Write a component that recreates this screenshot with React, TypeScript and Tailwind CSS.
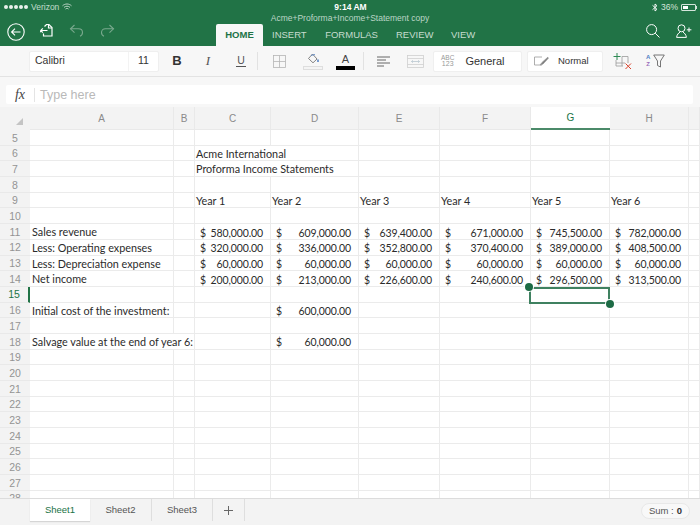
const ui = "font-['Liberation_Sans',Arial,sans-serif]";
const cols = [144, 21, 76, 88, 81, 91, 79, 79, 11];
const colNames = ["A", "B", "C", "D", "E", "F", "G", "H", ""];

type Cell = { t?: string; d?: string; v?: string; hideR?: boolean };
const money = (d: string | undefined, v: string): Cell => ({ d, v });

const rowsData: Record<number, Record<number, Cell>> = {
  6: { 2: { t: "Acme International", hideR: true } },
  7: { 2: { t: "Proforma Income Statements", hideR: true } },
  9: { 2: { t: "Year 1" }, 3: { t: "Year 2" }, 4: { t: "Year 3" }, 5: { t: "Year 4" }, 6: { t: "Year 5" }, 7: { t: "Year 6" } },
  11: { 0: { t: "Sales revenue" }, 2: money("$", "580,000.00"), 3: money("$", "609,000.00"), 4: money("$", "639,400.00"), 5: money("$", "671,000.00"), 6: money("$", "745,500.00"), 7: money("$", "782,000.00") },
  12: { 0: { t: "Less: Operating expenses" }, 2: money("$", "320,000.00"), 3: money("$", "336,000.00"), 4: money("$", "352,800.00"), 5: money("$", "370,400.00"), 6: money("$", "389,000.00"), 7: money("$", "408,500.00") },
  13: { 0: { t: "Less: Depreciation expense" }, 2: money("$", "60,000.00"), 3: money("$", "60,000.00"), 4: money("$", "60,000.00"), 5: money("$", "60,000.00"), 6: money("$", "60,000.00"), 7: money("$", "60,000.00") },
  14: { 0: { t: "Net income" }, 2: money("$", "200,000.00"), 3: money("$", "213,000.00"), 4: money("$", "226,600.00"), 5: money("$", "240,600.00"), 6: money("$", "296,500.00"), 7: money("$", "313,500.00") },
  16: { 0: { t: "Initial cost of the investment:" }, 3: money("$", "600,000.00") },
  18: { 0: { t: "Salvage value at the end of year 6:", hideR: true }, 3: money("$", "60,000.00") },
};
const rowNums = Array.from({ length: 24 }, (_, i) => i + 5);

function Row({ n }: { n: number }) {
  const data = rowsData[n] ?? {};
  return (
    <div className="flex h-[15.7px] shrink-0">
      <div className={`w-[30px] shrink-0 bg-[#f3f3f3] flex items-center justify-center pt-[1px] text-[10.5px] leading-none border-b border-[#e9e9e9] ${ui} ${n === 15 ? "text-[#217346] border-r-2 border-r-[#217346]" : "text-[#939393]"}`}>{n}</div>
      {cols.map((w, i) => {
        const c = data[i];
        return (
          <div key={i} style={{ width: w }} className={`relative shrink-0 border-b border-[#ebebeb] ${c?.hideR ? "" : "border-r"} border-r-[#ebebeb] text-[10.8px] leading-[16px] text-[#2b2b2b] font-['Lato',sans-serif] whitespace-nowrap`}>
            {c?.t && <span className={`${i === 0 ? "pl-[2px]" : "pl-[1px]"} relative z-10`}>{c.t}</span>}
            {c?.d && (
              <div className="flex justify-between pl-[5px] pr-[7px] pt-[0.5px] text-[10.5px] tracking-[-0.1px]">
                <span>{c.d}</span>
                <span>{c.v}</span>
              </div>
            )}
          </div>
        );
      })}
    </div>
  );
}

function Sep() {
  return <div className="w-px h-[18px] bg-[#e2e2e2]" />;
}

export default function App() {
  return (
    <div className={`w-[700px] h-[525px] relative overflow-hidden bg-white flex flex-col ${ui}`}>
      {/* Green header */}
      <div className="h-[46px] bg-[#217346] shrink-0 relative text-white flex flex-col">
        <div className="h-[14px] flex items-center justify-between pl-[4px] pr-[3px] text-[8.5px] relative">
          <div className="flex items-center gap-[3px] opacity-90">
            <span className="flex gap-[1px]">
              {[0, 1, 2, 3, 4].map((i) => (
                <span key={i} className="w-[4px] h-[4px] rounded-full bg-white" />
              ))}
            </span>
            <span className="text-[#d4e5db]">Verizon</span>
            <svg width="10" height="8" viewBox="0 0 10 8" fill="none" stroke="#dbe9e1" strokeWidth="0.9">
              <path d="M0.5 2.8C3 0.4 7 0.4 9.5 2.8" />
              <path d="M2 4.4C3.8 2.8 6.2 2.8 8 4.4" />
              <path d="M3.5 6C4.4 5.2 5.6 5.2 6.5 6" />
            </svg>
          </div>
          <span className="absolute left-0 right-0 text-center font-bold text-[8.5px] pl-[1px] pointer-events-none">9:14 AM</span>
          <div className="flex items-center gap-[3px] text-[#d4e5db]">
            <svg width="6" height="9" viewBox="0 0 6 9" fill="none" stroke="#fff" strokeWidth="0.9"><path d="M0.5 2.3L5 6.3L3 8V1L5 2.7L0.5 6.7" /></svg>
            <span>36%</span>
            <span className="w-[15px] h-[7px] border border-[#d4e5db] rounded-[1px] flex items-stretch p-px">
              <span className="w-[5px] bg-white" />
            </span>
            <span className="w-[1px] h-[3px] -ml-[3px] bg-[#d4e5db]" />
          </div>
        </div>
        <div className="absolute top-[12px] left-0 right-0 text-center text-[8.5px] text-[#bcd6c7]">Acme+Proforma+Income+Statement copy</div>
        <div className="flex-1 flex items-end">
          <div className="w-[216px] h-full flex items-center shrink-0">
            <svg className="ml-[7px] mt-[3px]" width="18" height="18" viewBox="0 0 18 18" fill="none" stroke="#fff" strokeWidth="1.1"><circle cx="9" cy="9" r="8.2" /><path d="M13.5 9H4.8M8 5.6L4.6 9L8 12.4" /></svg>
            <svg className="ml-[14px] mt-[1px]" width="15" height="15" viewBox="0 0 15 15" fill="none" stroke="#fff" strokeWidth="1.2"><path d="M5.5 3.5L7.5 1.5H10L13 4.5V13H4.5V10.5" /><path d="M9.5 1.5V5H13" /><path d="M8.5 7.5H3.5C2.2 7.5 1.5 8.3 1.5 9.2M3.8 5.4L1.8 7.5L3.8 9.6" /></svg>
            <svg className="ml-[15px] mt-[1px]" width="15" height="13" viewBox="0 0 15 13" fill="none" stroke="#7aa98e" strokeWidth="1.1"><path d="M5.5 1L1.5 4.8L5.5 8.6" /><path d="M1.5 4.8H9.5C12 4.8 13.5 6.6 13.5 8.6C13.5 10.4 12.5 11.7 11 12.3" /></svg>
            <svg className="ml-[16px] mt-[1px]" width="15" height="13" viewBox="0 0 15 13" fill="none" stroke="#7aa98e" strokeWidth="1.1"><path d="M9.5 1L13.5 4.8L9.5 8.6" /><path d="M13.5 4.8H5.5C3 4.8 1.5 6.6 1.5 8.6C1.5 10.4 2.5 11.7 4 12.3" /></svg>
          </div>
          <div className="w-[47px] h-[22px] pt-[1px] bg-[#f7f7f7] rounded-t-[2px] text-[#217346] text-[9.5px] font-bold flex items-center justify-center shrink-0">HOME</div>
          <div className="flex items-center h-[22px] pt-[1px] text-[9.5px] text-[#c6dccf]">
            <span className="ml-[9px]">INSERT</span>
            <span className="ml-[18.5px]">FORMULAS</span>
            <span className="ml-[18px]">REVIEW</span>
            <span className="ml-[17.5px]">VIEW</span>
          </div>
          <div className="ml-auto h-full flex items-center pr-[8px] gap-[16px]">
            <svg className="mt-[1px]" width="14" height="14" viewBox="0 0 14 14" fill="none" stroke="#fff" strokeWidth="1"><circle cx="5.6" cy="5.6" r="5" /><path d="M9.2 9.2L13.5 13.5" /></svg>
            <svg className="mt-[1px]" width="16" height="14" viewBox="0 0 16 14" fill="none" stroke="#fff" strokeWidth="1"><circle cx="5.5" cy="4.3" r="3.5" /><path d="M0.6 13.4C1 10.4 2.6 9 4 8.2M10.4 13.4C10 10.4 8.4 9 7 8.2" /><path d="M0.6 13.4H10.4" /><path d="M13 3.5V8M10.8 5.8H15.4" /></svg>
          </div>
        </div>
      </div>

      {/* Toolbar */}
      <div className="h-[31px] bg-[#f7f7f7] border-b border-[#e3e3e3] shrink-0 flex items-center">
        <div className="ml-[29px] w-[130px] h-[21px] bg-white rounded-[2px] border border-[#efefef] flex items-center text-[10.5px] text-[#333]">
          <span className="pl-[5px] flex-1">Calibri</span>
          <span className="w-px h-full bg-[#f3f3f3]" />
          <span className="w-[29px] text-center">11</span>
        </div>
        <span className="ml-[13px] w-[10px] text-center text-[13px] font-bold text-[#333]">B</span>
        <span className="ml-[22px] w-[8px] text-center text-[13px] italic text-[#555] font-['Liberation_Serif',serif]">I</span>
        <span className="ml-[24px] w-[10px] text-center text-[10.5px] text-[#555] border-b border-[#555] leading-[11px]">U</span>
        <span className="ml-[11px]"><Sep /></span>
        <svg className="ml-[15px]" width="13" height="13" viewBox="0 0 13 13" fill="none" stroke="#b5b5b5" strokeWidth="0.8"><rect x="0.5" y="0.5" width="12" height="12" /><path d="M6.5 0.5V12.5M0.5 6.5H12.5" /></svg>
        <div className="ml-[17px] w-[20px] flex flex-col items-center">
          <svg width="13" height="12" viewBox="0 0 13 12" fill="none" stroke="#666" strokeWidth="0.8"><path d="M5.5 1L10 6L6 9.8L1.5 5.5Z" /><path d="M11 6.5V9" stroke="#4e7fc4" strokeWidth="1.5" /><path d="M4 2.4L8 1.5" stroke="#4e7fc4" /></svg>
          <span className="mt-[1px] w-[20px] h-[4px] bg-[#f4f4f4] border border-[#dedede]" />
        </div>
        <div className="ml-[13px] w-[19px] flex flex-col items-center">
          <span className="text-[11px] leading-[12px] text-[#444]">A</span>
          <span className="mt-[1px] w-[19px] h-[4px] bg-black" />
        </div>
        <span className="ml-[8px]"><Sep /></span>
        <svg className="ml-[13px]" width="13" height="11" viewBox="0 0 13 11" fill="none" stroke="#666" strokeWidth="1"><path d="M0 1H13M0 4H9M0 7H13M0 10H7" /></svg>
        <svg className="ml-[17px]" width="17" height="13" viewBox="0 0 17 13" fill="none" stroke="#cfcfcf" strokeWidth="0.8"><rect x="0.5" y="0.5" width="16" height="12" /><path d="M0.5 3.5H16.5M0.5 9.5H16.5" /><path d="M4.5 6.5H12.5M6 5.3L4.5 6.5L6 7.7M11 5.3L12.5 6.5L11 7.7" stroke="#b9c6cf" /></svg>
        <div className="ml-[9px] w-[89px] h-[21px] bg-white rounded-[2px] border border-[#efefef] flex items-center">
          <span className="ml-[7px] text-[6.5px] leading-[6.5px] text-[#999] text-center">ABC<br /><span className="text-[7px]">123</span></span>
          <span className="ml-[11px] text-[11px] text-[#333]">General</span>
        </div>
        <div className="ml-[5px] w-[76px] h-[21px] bg-white rounded-[2px] border border-[#efefef] flex items-center">
          <svg className="ml-[6px]" width="15" height="10" viewBox="0 0 15 10" fill="none" stroke="#999" strokeWidth="0.8"><path d="M8 1H0.5V9H8" /><path d="M14 1L8 6.5L6 9L9 8L14.5 2" fill="#777" /></svg>
          <span className="ml-[9px] text-[9.5px] text-[#333]">Normal</span>
        </div>
        <svg className="ml-[10px]" width="19" height="17" viewBox="0 0 19 17" fill="none" strokeWidth="1"><path d="M4 0V7M0.5 3.5H7.5" stroke="#2f8a55" /><path d="M9 3.5H15V10M3 7V13H10M3 10H12M9 3.5V13" stroke="#999" strokeWidth="0.8" /><path d="M12.5 10.5L18 16M18 10.5L12.5 16" stroke="#d9412b" /></svg>
        <div className="ml-[14px] flex flex-col text-[6px] leading-[7px] font-bold items-center">
          <span className="text-[#4e7fc4]">A</span>
          <span className="text-[#9a6dbb]">Z</span>
        </div>
        <svg className="ml-[3px]" width="12" height="14" viewBox="0 0 12 14" fill="none" stroke="#666" strokeWidth="0.9"><path d="M0.7 1H11.3L7.5 7V13L4.5 11.5V7Z" /></svg>
      </div>

      {/* Formula bar */}
      <div className="h-[30px] bg-[#f7f7f7] shrink-0 flex items-start pt-[8px] pl-[6px] pr-[7px]">
        <div className="flex-1 h-[19px] bg-white rounded-[2px] flex items-center">
          <span className="w-[28px] text-center text-[14px] italic text-[#444] font-['Liberation_Serif',serif]">fx</span>
          <span className="w-px h-[14px] bg-[#e4e4e4]" />
          <span className="ml-[5px] pt-[1px] text-[12.5px] text-[#b9b9b9]">Type here</span>
        </div>
      </div>

      {/* Column headers */}
      <div className="flex h-[23px] shrink-0 bg-[#f3f3f3] text-[10px] text-[#8a8a8a]">
        <div className="w-[30px] shrink-0 flex items-end justify-end pr-[7px] pb-[5px]">
          <span className="w-0 h-0 border-l-[7px] border-l-transparent border-b-[7px] border-b-[#c4c4c4]" />
        </div>
        {cols.map((w, i) =>
          colNames[i] === "G" ? (
            <div key={i} style={{ width: w }} className="shrink-0 bg-white border-b-2 border-[#4b8a69] text-[#217346] flex items-center justify-center">G</div>
          ) : (
            <div key={i} style={{ width: w }} className="shrink-0 border-r border-b border-[#e9e9e9] flex items-center justify-center">{colNames[i]}</div>
          )
        )}
      </div>

      {/* Grid */}
      <div className="flex-1 overflow-hidden relative">
        {rowNums.map((n) => <Row key={n} n={n} />)}
        {/* Selection */}
        <div className="absolute left-[529px] top-[157px] w-[81px] h-[17px] border-2 border-[#3f8160]" />
        <div className="absolute left-[525px] top-[153px] w-[8px] h-[8px] rounded-full bg-[#1d6b45] ring-1 ring-white" />
        <div className="absolute left-[606px] top-[170px] w-[8px] h-[8px] rounded-full bg-[#1d6b45] ring-1 ring-white" />
      </div>

      {/* Sheet tabs */}
      <div className="h-[27px] bg-[#f3f3f3] border-t border-[#dcdcdc] shrink-0 flex items-start text-[9.5px] text-[#555] relative">
        <div className="ml-[30px] w-[60px] h-[22px] bg-white shadow-[0_1px_1px_rgba(0,0,0,0.12)] text-[#217346] flex items-center justify-center">Sheet1</div>
        <div className="w-[62px] h-[22px] border-r border-[#dedede] flex items-center justify-center">Sheet2</div>
        <div className="w-[61px] h-[22px] border-r border-[#dedede] flex items-center justify-center">Sheet3</div>
        <div className="w-[32px] h-[22px] border-r border-[#dedede] flex items-center justify-center">
          <svg width="11" height="11" viewBox="0 0 11 11" stroke="#666" strokeWidth="1"><path d="M5.5 1V10M1 5.5H10" /></svg>
        </div>
        <div className="absolute right-[10px] top-[4px] w-[49px] h-[16px] bg-[#f8f8f8] border border-[#e8e8e8] rounded-full flex items-center justify-center gap-[3px] text-[9.5px]">
          <span>Sum :</span>
          <span className="font-bold text-[#333]">0</span>
        </div>
      </div>
    </div>
  );
}
